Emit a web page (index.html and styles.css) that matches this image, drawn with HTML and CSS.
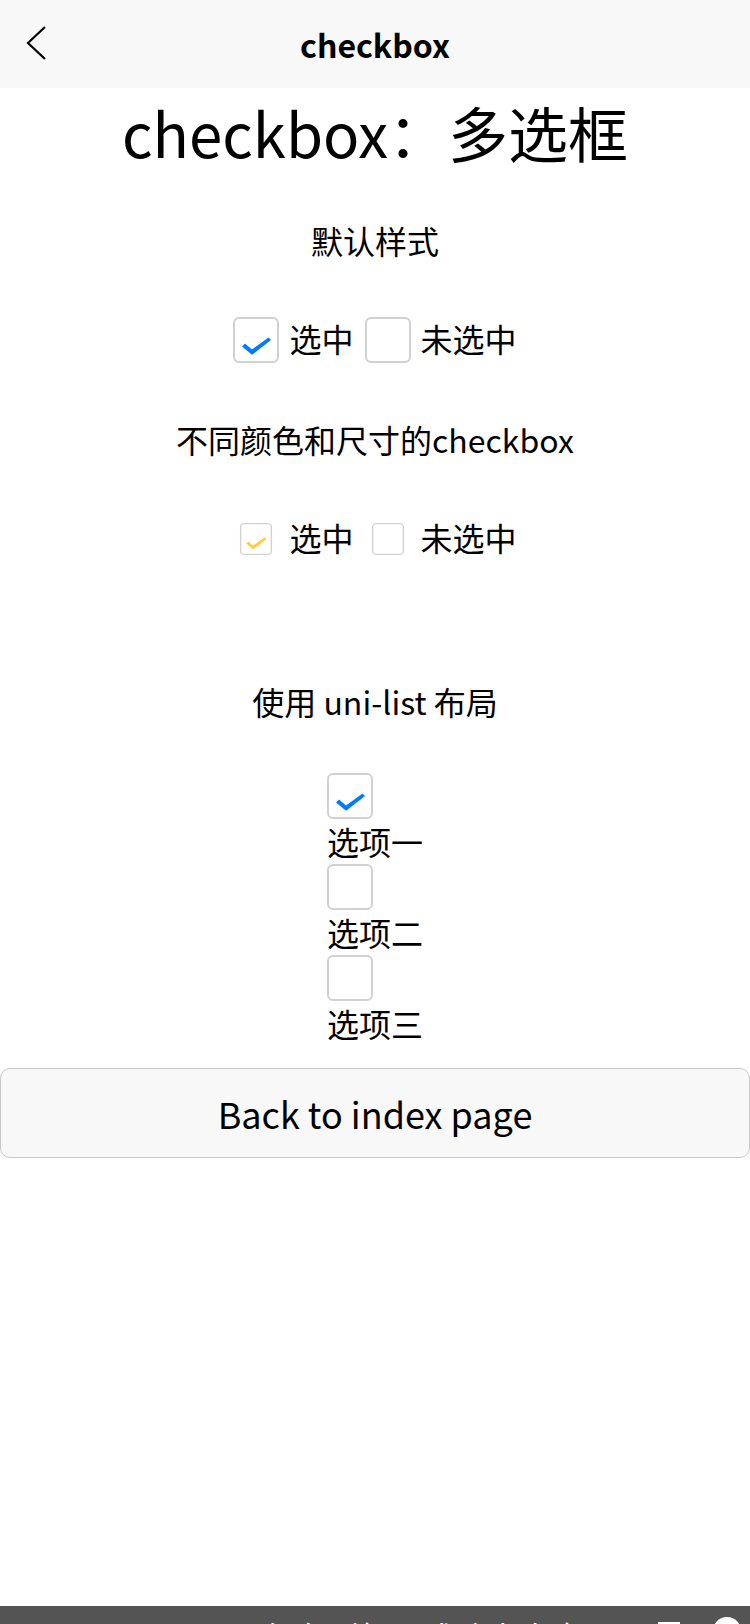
FILE: index.html
```html
<!DOCTYPE html>
<html lang="zh-CN">
<head>
<meta charset="utf-8">
<title>checkbox</title>
<link rel="stylesheet" href="styles.css">
</head>
<body>
<div class="nav">
  <svg class="back" width="22" height="36" viewBox="0 0 22 36"><polyline points="19,1 2,17 19,33" fill="none" stroke="#000" stroke-width="2.2"/></svg>
  <div class="nav-title">checkbox</div>
  <div></div>
</div>

<h1 class="heading">checkbox：多选框</h1>

<div class="sub sub-first">默认样式</div>
<div class="row">
  <label class="opt"><span class="cb"><svg viewBox="0 0 46 46"><path class="mark mark-blue" d="M9 29.5 L12 26.5 L19 32.5 L35.5 20.5 L38 23 L19 37.8 Z"/></svg></span><span class="opt-text">选中</span></label>
  <label class="opt"><span class="cb"></span><span class="opt-text">未选中</span></label>
</div>

<div class="sub">不同颜色和尺寸的checkbox</div>
<div class="row row-last">
  <label class="opt"><span class="cb cb-small"><svg viewBox="0 0 46 46"><path class="mark mark-yellow" d="M9 29.5 L12 26.5 L19 32.5 L35.5 20.5 L38 23 L19 37.8 Z"/></svg></span><span class="opt-text">选中</span></label>
  <label class="opt"><span class="cb cb-small"></span><span class="opt-text">未选中</span></label>
</div>

<div class="sub">使用 uni-list 布局</div>
<div class="list">
  <label class="item"><span class="cb"><svg viewBox="0 0 46 46"><path class="mark mark-blue" d="M9 29.5 L12 26.5 L19 32.5 L35.5 20.5 L38 23 L19 37.8 Z"/></svg></span><span class="item-text">选项一</span></label>
  <label class="item"><span class="cb"></span><span class="item-text">选项二</span></label>
  <label class="item"><span class="cb"></span><span class="item-text">选项三</span></label>
</div>

<button class="btn" type="button">Back to index page</button>

<div class="toast">
  <span class="toast-text">保存到相册成功点击查看</span>
  <span class="toast-square"></span>
  <span class="toast-dot"></span>
</div>
</body>
</html>
```
FILE: styles.css
```css
* { box-sizing: border-box; }
html, body { margin: 0; padding: 0; background: #fff; }
body {
  font-family: "Noto Sans CJK SC", "Noto Sans", sans-serif;
  color: #000;
  width: 750px;
  min-height: 1624px;
}

.nav {
  height: 88px;
  background: #f8f8f8;
  display: grid;
  grid-template-columns: 1fr auto 1fr;
  align-items: center;
}
.back { display: block; margin-left: 26px; }
.nav-title { font-size: 32px; font-weight: 700; line-height: 88px; }

.heading {
  margin: 0;
  font-size: 60px;
  font-weight: 400;
  line-height: 88px;
  text-align: center;
}

.sub { font-size: 32px; line-height: 44px; text-align: center; }
.sub-first { margin-top: 42px; }

.row {
  display: flex;
  justify-content: center;
  align-items: center;
  gap: 11px;
  height: 46px;
  margin: 55px 0 54px;
  font-size: 32px;
}
.row-last { margin-bottom: 117px; }

.opt { display: flex; align-items: center; }
.opt-text { line-height: 44px; position: relative; top: -2px; }

.cb {
  display: block;
  flex: none;
  width: 46px;
  height: 46px;
  border: 2px solid #d1d1d1;
  border-radius: 6px;
  background: #fff;
  margin-right: 10px;
  position: relative;
}
.cb svg { position: absolute; left: -2px; top: -2px; width: 46px; height: 46px; display: block; }
.cb-small { transform: scale(0.7); }
.mark-blue { fill: #007aff; }
.mark-yellow { fill: #ffcc33; }

.list { width: max-content; margin: 50px auto 0; }
.item { display: flex; flex-direction: column; align-items: flex-start; }
.item .cb { margin-right: 0; }
.item-text { font-size: 32px; line-height: 45px; }

.btn {
  display: block;
  width: 750px;
  height: 90px;
  margin: 22px 0 0;
  padding: 0;
  border: 1px solid #c8c8c8;
  border-radius: 10px;
  background: #f8f8f8;
  font-family: "Noto Sans CJK SC", "Noto Sans", sans-serif;
  font-size: 36px;
  line-height: 88px;
  color: #000;
  text-align: center;
}

.toast {
  position: fixed;
  left: 0;
  right: 0;
  bottom: 0;
  height: 18px;
  background: #545454;
  overflow: hidden;
  display: flex;
  align-items: flex-start;
  padding-left: 263px;
}
.toast-text { color: #fff; font-size: 32px; line-height: 44px; margin-top: 8px; white-space: nowrap; width: 327px; overflow: hidden; }
.toast-square { width: 22px; height: 20px; border: 2px solid #fff; margin: 16px 0 0 68px; }
.toast-dot { width: 28px; height: 28px; border-radius: 50%; background: #fff; margin: 11px 0 0 33px; }
```
